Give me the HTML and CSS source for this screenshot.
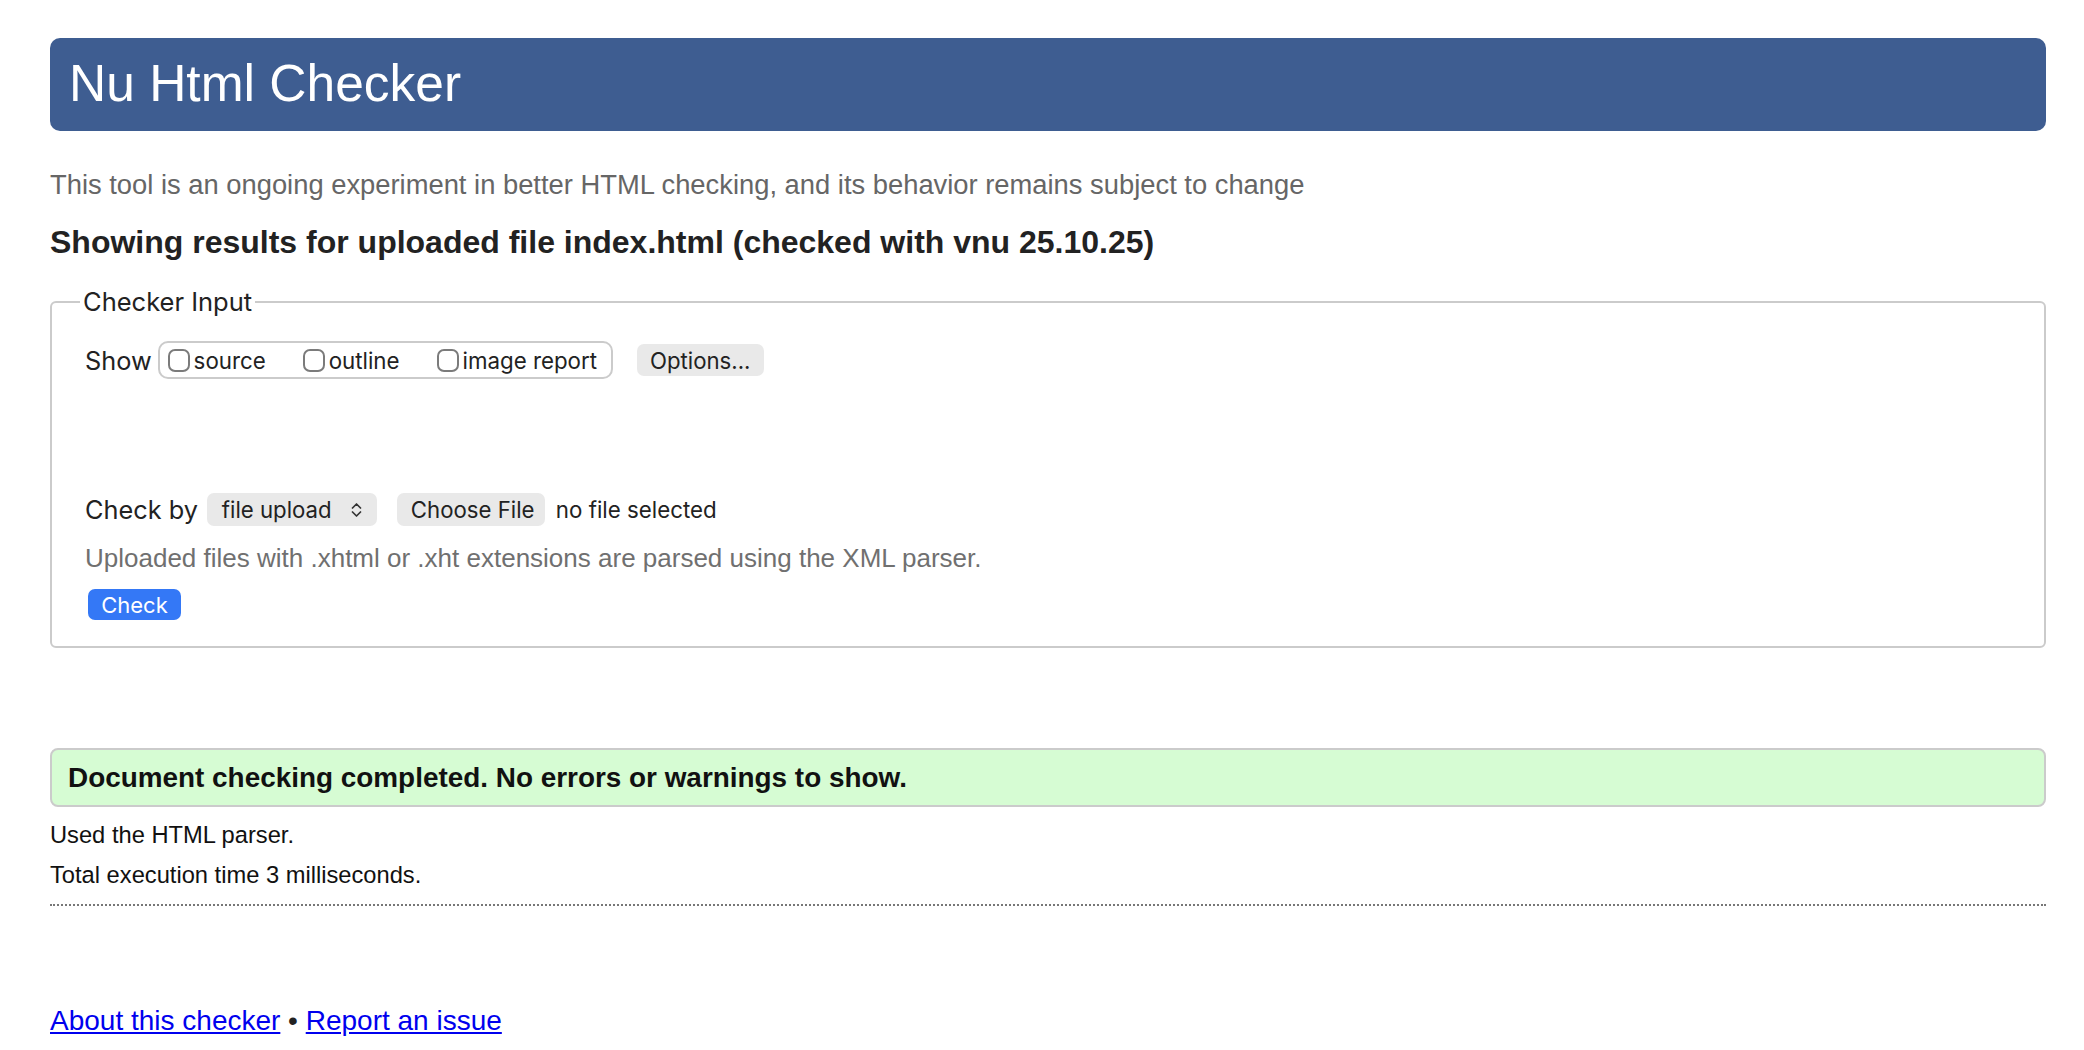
FILE: index.html
```html
<!DOCTYPE html>
<html lang="en">
<head>
<meta charset="utf-8">
<title>Showing results for uploaded file index.html - Nu Html Checker</title>
<link rel="stylesheet" href="styles.css">
</head>
<body>
<header class="banner"><h1>Nu Html Checker</h1></header>
<p class="intro">This tool is an ongoing experiment in better HTML checking, and its behavior remains subject to change</p>
<h2 class="results">Showing results for uploaded file index.html (checked with vnu 25.10.25)</h2>
<form class="checker">
  <fieldset class="input">
    <legend>Checker Input</legend>
    <div class="show-row">
      <span class="show-label">Show</span>
      <div class="group">
        <label class="opt"><span class="cb"></span>source</label>
        <label class="opt"><span class="cb"></span>outline</label>
        <label class="opt"><span class="cb"></span>image report</label>
      </div>
      <span class="btn options">Options...</span>
    </div>
    <div class="checkby-row">
      <span class="checkby-label">Check by</span>
      <span class="btn select">file upload
        <svg class="chev" width="13" height="18" viewBox="0 0 13 18"><path d="M2.5 7 L6.5 3 L10.5 7 M2.5 11 L6.5 15 L10.5 11" fill="none" stroke="#333" stroke-width="1.7" stroke-linecap="round" stroke-linejoin="round"/></svg>
      </span>
      <span class="btn choose">Choose File</span>
      <span class="nofile">no file selected</span>
    </div>
    <p class="note">Uploaded files with .xhtml or .xht extensions are parsed using the XML parser.</p>
    <span class="check">Check</span>
  </fieldset>
</form>
<div class="success">Document checking completed. No errors or warnings to show.</div>
<p class="meta first">Used the HTML parser.</p>
<p class="meta">Total execution time 3 milliseconds.</p>
<hr class="dots">
<p class="footer"><a href="#">About this checker</a> • <a href="#">Report an issue</a></p>
</body>
</html>
```
FILE: styles.css
```css
html, body {
  background: #fff;
}
body {
  margin: 0;
  padding: 38px 38px 0 50px;
  font-family: "Liberation Sans", Arial, Helvetica, sans-serif;
  color: #222;
}
.banner {
  height: 93px;
  box-sizing: border-box;
  background: #3e5d91;
  border-radius: 10px;
  display: flex;
  align-items: center;
  padding: 0 0 2px 19px;
}
.banner h1 {
  margin: 0;
  font-weight: normal;
  font-size: 51.5px;
  line-height: 51px;
  color: #fff;
}
.intro {
  margin: 38px 0 0;
  font-size: 27.35px;
  line-height: 32px;
  color: #666;
}
.results {
  margin: 22px 0 0;
  font-size: 32px;
  line-height: 38px;
  font-weight: bold;
  color: #222;
}
.checker {
  margin: 26px 0 0;
}
.input {
  margin: 0;
  padding: 0 30px 26px 33px;
  border: 2px solid #cbcbcb;
  border-radius: 6px;
  min-width: 0;
  font-family: Inter, "Noto Sans", sans-serif;
}
.input legend {
  padding: 0 3px;
  margin-left: -5px;
  font-size: 25.5px;
  line-height: 30px;
  color: #222;
}
.show-row {
  display: flex;
  align-items: center;
  margin-top: 24px;
  height: 38px;
}
.show-label, .checkby-label {
  font-size: 25.3px;
  color: #222;
}
.show-label {
  margin-right: 6px;
}
.group {
  display: flex;
  align-items: center;
  height: 38px;
  box-sizing: border-box;
  border: 2px solid #cbcbcb;
  border-radius: 10px;
  padding: 0 14px 0 8px;
}
.opt {
  display: flex;
  align-items: center;
  font-size: 22.3px;
  color: #222;
}
.opt + .opt {
  margin-left: 37px;
}
.cb {
  width: 22px;
  height: 23px;
  box-sizing: border-box;
  border: 2.5px solid #7b7b7b;
  border-radius: 7px;
  background: #fff;
  margin-right: 4px;
}
.btn {
  display: inline-flex;
  align-items: center;
  box-sizing: border-box;
  background: #e9e9e9;
  border-radius: 7px;
  font-size: 22.2px;
  color: #222;
}
.options {
  margin-left: 24px;
  height: 32px;
  width: 127px;
  padding-left: 13px;
}
.checkby-row {
  display: flex;
  align-items: center;
  margin-top: 114px;
  height: 33px;
}
.checkby-label {
  margin-right: 9px;
}
.select {
  height: 33px;
  width: 170px;
  padding: 0 14px 0 15px;
  justify-content: space-between;
}
.chev {
  display: block;
}
.choose {
  margin-left: 20px;
  height: 33px;
  width: 148px;
  padding-left: 14px;
}
.nofile {
  margin-left: 11px;
  font-size: 22.3px;
  color: #222;
}
.note {
  margin: 19px 0 0;
  font-family: "Liberation Sans", Arial, sans-serif;
  font-size: 26px;
  line-height: 26px;
  color: #707070;
}
.check {
  display: flex;
  align-items: center;
  justify-content: center;
  width: 93px;
  height: 31px;
  margin: 18px 0 0 3px;
  background: #3478f6;
  border-radius: 7px;
  color: #fff;
  font-size: 22px;
}
.success {
  margin-top: 100px;
  height: 59px;
  box-sizing: border-box;
  border: 2px solid #cbcbcb;
  border-radius: 8px;
  background: #d6fcd3;
  display: flex;
  align-items: center;
  padding-left: 16px;
  font-weight: bold;
  font-size: 27.9px;
  color: #111;
}
.meta {
  margin: 10px 0 0;
  font-size: 23.7px;
  line-height: 30px;
  color: #111;
}
.meta.first {
  margin-top: 13px;
}
.dots {
  margin: 14px 0 0;
  height: 0;
  border: 0;
  border-top: 2px dotted #777;
}
.footer {
  margin: 98px 0 0;
  font-size: 28px;
  line-height: 34px;
  color: #222;
}
.footer a {
  color: #0000ee;
}
```
